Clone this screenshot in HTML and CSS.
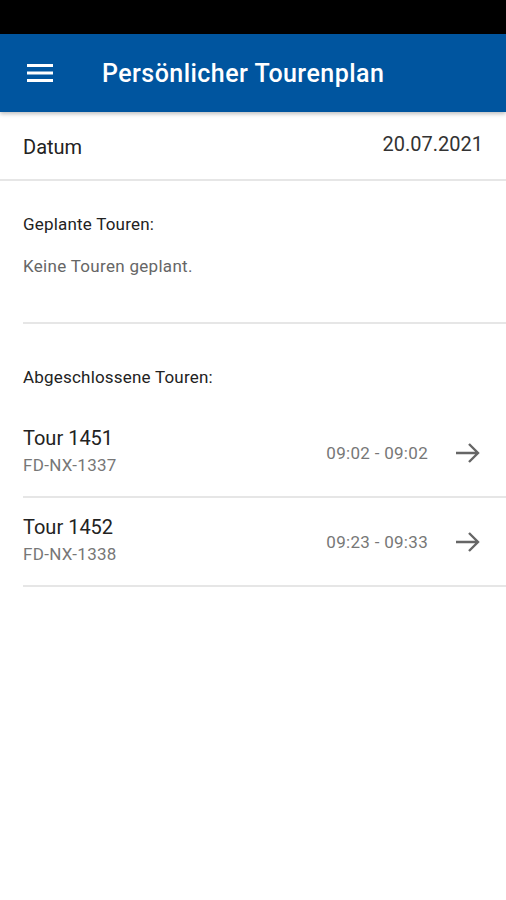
FILE: index.html
```html
<!DOCTYPE html>
<html lang="de">
<head>
    <meta charset="UTF-8">
    <meta name="viewport" content="width=device-width, initial-scale=1.0">
    <title>Persönlicher Tourenplan</title>
    <link rel="stylesheet" href="styles.css">
</head>
<body>
    <div class="statusbar"></div>
    <header class="appbar">
        <svg class="menu" width="26" height="18" viewBox="0 0 26 18">
            <rect x="0" y="0" width="26" height="3" fill="#fff"/>
            <rect x="0" y="7.5" width="26" height="3" fill="#fff"/>
            <rect x="0" y="15" width="26" height="3" fill="#fff"/>
        </svg>
        <h1>Persönlicher Tourenplan</h1>
    </header>

    <div class="date-row">
        <span class="date-label">Datum</span>
        <span class="date-value">20.07.2021</span>
    </div>

    <section class="section planned">
        <div class="section-title">Geplante Touren:</div>
        <div class="empty">Keine Touren geplant.</div>
    </section>

    <section class="section done">
        <div class="section-title">Abgeschlossene Touren:</div>
        <div class="tour">
            <div class="tour-info">
                <div class="tour-name">Tour 1451</div>
                <div class="tour-plate">FD-NX-1337</div>
            </div>
            <span class="tour-time">09:02 - 09:02</span>
            <svg class="arrow" width="26" height="22" viewBox="0 0 26 22">
                <path d="M1 11 H23 M14 2 L23 11 L14 20" fill="none" stroke="#666" stroke-width="2.4"/>
            </svg>
        </div>
        <div class="tour">
            <div class="tour-info">
                <div class="tour-name">Tour 1452</div>
                <div class="tour-plate">FD-NX-1338</div>
            </div>
            <span class="tour-time">09:23 - 09:33</span>
            <svg class="arrow" width="26" height="22" viewBox="0 0 26 22">
                <path d="M1 11 H23 M14 2 L23 11 L14 20" fill="none" stroke="#666" stroke-width="2.4"/>
            </svg>
        </div>
    </section>
</body>
</html>
```

FILE: styles.css
```css
body {
    margin: 0;
    font-family: Roboto, 'Liberation Sans', sans-serif;
    color: #222;
    background-color: #fff;
}
.statusbar {
    height: 34px;
    background-color: #000;
}
.appbar {
    height: 78px;
    background-color: #00559f;
    display: flex;
    align-items: center;
    padding-left: 27px;
    box-shadow: 0 2px 4px rgba(0, 0, 0, 0.25);
    position: relative;
}
.menu {
    margin-right: 49px;
}
.appbar h1 {
    margin: 0;
    color: #fff;
    font-size: 25px;
    font-weight: 500;
    letter-spacing: 0.45px;
}
.date-row {
    height: 67px;
    display: flex;
    justify-content: space-between;
    align-items: center;
    padding: 0 23px;
    border-bottom: 2px solid #e6e6e6;
    font-size: 20px;
}
.date-label {
    margin-top: 2px;
}
.date-value {
    margin-top: -3px;
    color: #333;
}
.section {
    margin-left: 23px;
}
.section-title {
    font-size: 17px;
    letter-spacing: 0.2px;
    color: #222;
}
.planned {
    height: 143px;
    border-bottom: 2px solid #e6e6e6;
    box-sizing: border-box;
    padding-top: 33px;
}
.empty {
    margin-top: 22px;
    font-size: 17px;
    letter-spacing: 0.3px;
    color: #666;
}
.done {
    padding-top: 43px;
}
.done .section-title {
    margin-bottom: 22px;
}
.tour {
    height: 87px;
    display: flex;
    align-items: center;
    border-bottom: 2px solid #e6e6e6;
    padding-right: 25px;
}
.tour-info {
    flex: 1;
    padding-bottom: 4px;
}
.tour-name {
    font-size: 20px;
    color: #222;
}
.tour-plate {
    font-size: 17px;
    letter-spacing: 0.3px;
    color: #777;
    margin-top: 5px;
}
.tour-time {
    font-size: 17px;
    letter-spacing: 0.3px;
    color: #777;
    margin-right: 27px;
}
```
